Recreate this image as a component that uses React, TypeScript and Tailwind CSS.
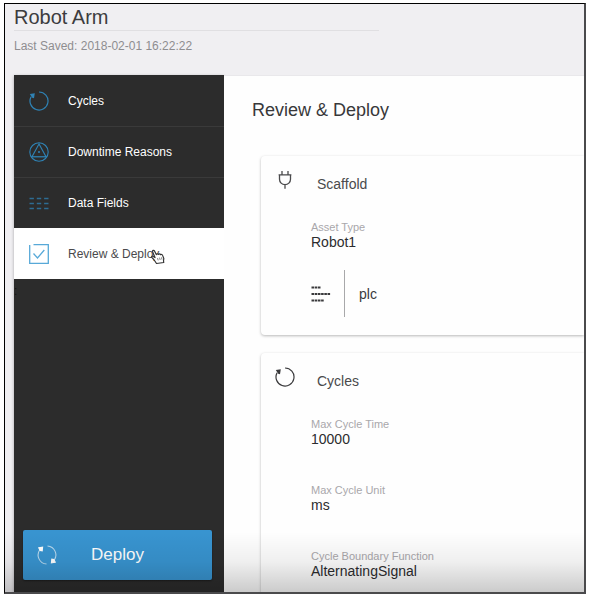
import type { ReactNode } from "react";

function CycleIcon({ className }: { className: string }) {
  return (
    <svg viewBox="0 0 20 20" className={className} fill="none" stroke="currentColor" strokeWidth="1.2">
      <path d="M10 1a9 9 0 1 1-7.9 4.7" />
      <path d="M.8 3.1 5.8 2.2 5 7.2 3.2 6.8Z" fill="currentColor" stroke="none" />
    </svg>
  );
}

function DowntimeIcon({ className }: { className: string }) {
  return (
    <svg viewBox="0 0 20 20" className={className} fill="none" stroke="currentColor" strokeWidth="1.1">
      <circle cx="10" cy="10" r="9.2" />
      <path d="M10 2 3 14.8h14Z" />
      <path d="M1.8 14.8h16.4" strokeOpacity=".6" />
      <circle cx="10" cy="10" r="1" fill="currentColor" stroke="none" />
    </svg>
  );
}

function FieldsIcon({ className }: { className: string }) {
  return (
    <svg viewBox="0 0 20 20" className={className} fill="none" stroke="currentColor" strokeOpacity=".75" strokeWidth="1.5">
      <path d="M.5 5.5h4.4M7.8 5.5h4.4M15.1 5.5h4.4M.5 10.5h4.4M7.8 10.5h4.4M15.1 10.5h4.4M.5 15.5h4.4M7.8 15.5h4.4M15.1 15.5h4.4" />
    </svg>
  );
}

function ReviewIcon({ className }: { className: string }) {
  return (
    <svg viewBox="0 0 20 20" className={className} fill="none" stroke="currentColor" strokeWidth="1.3">
      <path d="M.7 1v18.3h18.6V.7H4.5" />
      <path d="m4.5 9.5 4 4.5 6.8-8" />
    </svg>
  );
}

function PlugIcon({ className }: { className: string }) {
  return (
    <svg viewBox="0 0 20 20" className={className} fill="none" stroke="currentColor" strokeWidth="1.3">
      <path d="M7 1v3.6M13 1v3.6M3.6 4.8h12.8M4.5 4.8v4.4a5.5 5.5 0 0 0 11 0V4.8M10 14.7v4" />
    </svg>
  );
}

function PlcIcon({ className }: { className: string }) {
  return (
    <svg viewBox="0 0 20 20" className={className} fill="none" stroke="currentColor" strokeWidth="2" strokeDasharray="2.6 .6">
      <path d="M.5 3.5h9M.5 10h18.8M.5 16.5h12.2" />
    </svg>
  );
}

function DeployIcon({ className }: { className: string }) {
  return (
    <svg viewBox="0 0 20 20" className={className} fill="none" stroke="currentColor" strokeWidth="1.1">
      <path d="M10.5 1a9 9 0 0 1 6.7 14.2M9.5 19A9 9 0 0 1 2.8 4.8" strokeOpacity=".65" />
      <path d="M1.8 2.8 5.6 2.2 5.2 5.8 3.2 5.4ZM18.2 17.2 14.4 17.8l.4-3.6 2 .4Z" fill="currentColor" />
    </svg>
  );
}

function HandCursor({ className }: { className: string }) {
  return (
    <svg viewBox="0 0 14 16" className={className} fill="#fff" stroke="#333" strokeWidth="1.2" strokeLinejoin="round">
      <path d="M5.5 14.5 3.2 11 .8 8.4c-.5-.9.6-1.7 1.5-1l1.7 1.2L1.6 2.7C1.2 1.4 2.9.8 3.5 2l1.8 3.6c.3-1 1.7-1.1 2.1-.1.5-.8 1.7-.8 2.1.2.7-.6 1.8-.2 2.1.7l1.2 3.1-.3 2.5.3 1.5Z" />
      <path d="m6.5 9 .7 2.4M8.5 8.6l.7 2.4M10.4 8.3l.6 2.3" strokeWidth=".6" />
    </svg>
  );
}

const steps = [
  { label: "Cycles", Icon: CycleIcon },
  { label: "Downtime Reasons", Icon: DowntimeIcon },
  { label: "Data Fields", Icon: FieldsIcon },
];

function Field({ label, value }: { label: string; value: string }) {
  return (
    <div>
      <dt className="text-[11px] leading-[14px] text-[#a9a7ab]">{label}</dt>
      <dd className="text-sm leading-4 text-[#2c2c2e]">{value}</dd>
    </div>
  );
}

function Card({ title, icon, children }: { title: string; icon: ReactNode; children: ReactNode }) {
  return (
    <section className="shrink-0 rounded-l-sm bg-[#fefefe] pt-[14px] pl-[14px] shadow-[0_1px_3px_rgba(0,0,0,0.28)]">
      <header className="flex items-start gap-[22px] text-[#4a4a4c]">
        {icon}
        <h3 className="pt-1 text-sm leading-5">{title}</h3>
      </header>
      <div className="pl-9">{children}</div>
    </section>
  );
}

export default function App() {
  return (
    <div className="h-screen bg-white pt-[3px] pr-[5px] pb-[7px] pl-1 font-['Liberation_Sans',Arial,sans-serif]">
      <div className="relative flex h-full flex-col overflow-hidden border border-r-2 border-b-2 border-t-black border-r-[#4a4a4c] border-b-[#4a4a4c] border-l-black bg-[#f0eff2]">
        <header className="h-[71px] shrink-0 pl-[9px]">
          <h1 className="w-[365px] max-w-full border-b border-[#e0dfe2] text-xl leading-[26px] text-[#3c3c3e]">Robot Arm</h1>
          <p className="pt-[7px] text-xs leading-4 text-[#8e8d90]">Last Saved: 2018-02-01 16:22:22</p>
        </header>
        <div className="flex min-h-0 flex-1 pl-[9px]">
          <aside className="flex w-[210px] shrink-0 flex-col bg-[#2c2c2c] shadow-[0_1px_3px_rgba(0,0,0,0.3)]">
            <nav className="text-xs">
              {steps.map(({ label, Icon }) => (
                <button key={label} type="button" className="flex h-[51px] w-full items-center gap-[19px] border-t border-[#3a3a3a] pl-[15px] text-left text-white first:border-transparent">
                  <Icon className="size-5 text-[#2f82b4]" />
                  {label}
                </button>
              ))}
              <button type="button" aria-current="step" className="relative flex h-[51px] w-full items-center gap-[19px] bg-white pl-[15px] text-left text-[#4a4a4c]">
                <ReviewIcon className="size-5 text-[#57a9d8]" />
                Review &amp; Deploy
                <HandCursor className="absolute top-[21px] left-[137px] h-4 w-[14px]" />
              </button>
            </nav>
            <p className="pt-1 text-xs leading-4 text-[#141414]">:</p>
            <button type="button" className="mt-auto mr-3 mb-3 ml-[9px] flex h-[50px] items-center gap-[34px] rounded-xs bg-[#3894d0] pl-[14px] text-[17px] text-white shadow-[0_1px_2px_rgba(0,0,0,0.4)]">
              <DeployIcon className="size-5" />
              Deploy
            </button>
          </aside>
          <main className="flex min-w-0 flex-1 flex-col gap-[18px] overflow-hidden border-t border-[#e9e8eb] bg-[#fefefe] pl-[37px]">
            <h2 className="-ml-[9px] shrink-0 pt-6 pb-[18px] text-lg leading-5 text-[#38383a]">Review &amp; Deploy</h2>
            <Card title="Scaffold" icon={<PlugIcon className="size-5 text-[#4a4a4c]" />}>
              <dl className="pt-[26px]">
                <Field label="Asset Type" value="Robot1" />
              </dl>
              <div className="mt-5 mb-[18px] flex h-[47px] items-center text-[#3a3a3c]">
                <PlcIcon className="size-5" />
                <span className="ml-[13px] flex h-full items-center border-l border-[#a8a8aa] pl-[14px] text-sm">plc</span>
              </div>
            </Card>
            <Card title="Cycles" icon={<CycleIcon className="size-5 text-[#3a3a3c]" />}>
              <dl className="flex flex-col gap-9 pt-[26px] pb-8">
                <Field label="Max Cycle Time" value="10000" />
                <Field label="Max Cycle Unit" value="ms" />
                <Field label="Cycle Boundary Function" value="AlternatingSignal" />
              </dl>
            </Card>
          </main>
        </div>
        <div className="pointer-events-none absolute inset-x-0 bottom-0 h-[60px] bg-linear-to-b from-transparent via-black/6 to-black/20" />
      </div>
    </div>
  );
}
